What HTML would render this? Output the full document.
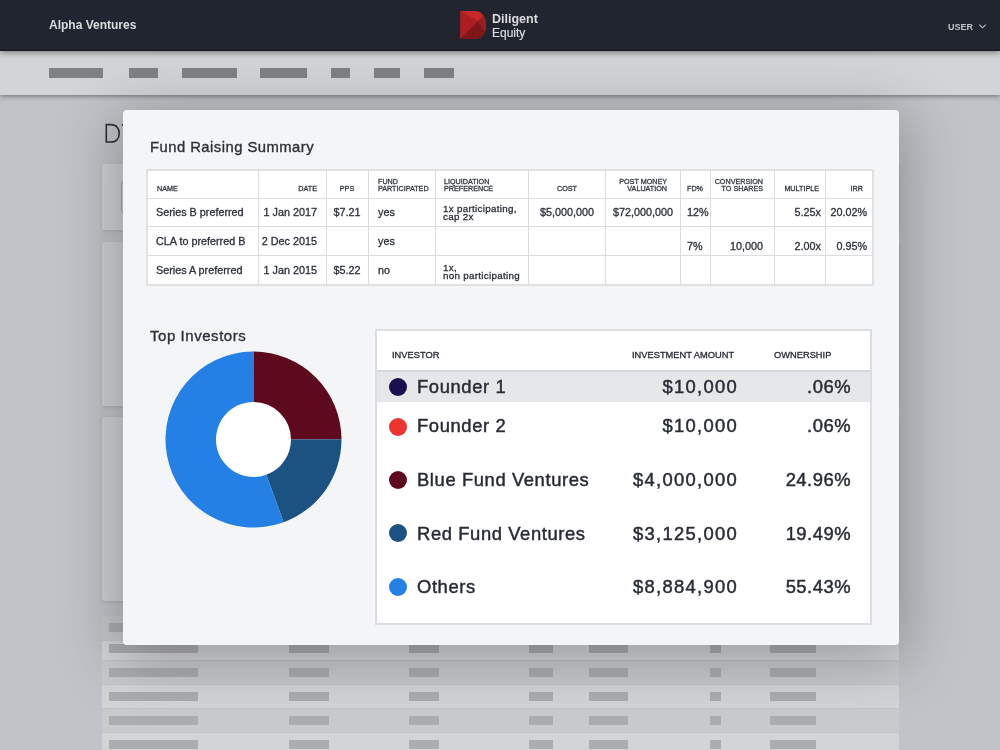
<!DOCTYPE html>
<html><head><meta charset="utf-8">
<style>
*{margin:0;padding:0;box-sizing:border-box;}
html,body{width:1000px;height:750px;overflow:hidden;}
body{position:relative;background:#c0c3c7;font-family:"Liberation Sans",sans-serif;color:#2b303a;}
.abs{position:absolute;}
.t{position:absolute;white-space:nowrap;will-change:transform;}
#hdr{left:0;top:0;width:1000px;height:49.5px;background:#21252f;z-index:3;box-shadow:0 1px 0 #14171d,0 2px 7px rgba(0,0,0,.5);}
#nav{left:0;top:50px;width:1000px;height:44.5px;background:#d3d4d6;z-index:2;box-shadow:0 1px 5px rgba(0,0,0,.45);}
.nb{position:absolute;top:18px;height:9.5px;background:#7e8284;}
.card{position:absolute;left:102px;width:797px;background:#cfd0d2;border-radius:2px;box-shadow:0 1px 3px rgba(0,0,0,.12);}
.brow{position:absolute;left:102px;width:797px;border-top:1px solid #c2c3c5;}
.bar{position:absolute;height:9px;background:#acadaf;}
#modal{left:123px;top:109.5px;width:776px;height:535.5px;background:#f4f5f7;border-radius:4px;z-index:5;box-shadow:0 10px 60px 6px rgba(0,0,0,.27);}
#mc{position:absolute;left:0;top:0;width:1000px;height:750px;z-index:6;}
.vl{position:absolute;width:1px;background:#dcdddf;}
.hl{position:absolute;height:1px;background:#dcdddf;}
.dot{position:absolute;width:18px;height:18px;border-radius:50%;}
</style></head><body>
<div id="hdr" class="abs">
<div class="t" style="left:49.00px;top:18.54px;font-size:12px;line-height:12px;font-weight:bold;color:#dcdde0;letter-spacing:0px;">Alpha Ventures</div>
<svg class="abs" style="left:459px;top:10px" width="28" height="30" viewBox="0 0 28 30">
<path d="M1.1 1.1 H15 C23 1.1 27.1 7 27.1 15 C27.1 23 23 29 15 29 H1.1 Z" fill="#ad1e24"/>
<path d="M1.1 1.1 H15 C19.5 1.1 22.5 3 24.2 5.9 L19 10.9 Z" fill="#c8292a"/>
<path d="M1.1 29 L19 10.9 L26 21.6 C24.5 26.2 20.5 29 15 29 Z" fill="#7f171a"/>
<path d="M19 10.9 L24.2 5.9 C26.1 8.5 27.1 11.5 27.1 15 C27.1 17.5 26.7 19.7 26 21.6 Z" fill="#96201f"/>
</svg>
<div class="t" style="left:491.60px;top:13.32px;font-size:12.5px;line-height:12.5px;font-weight:bold;color:#dcdde0;letter-spacing:0px;">Diligent</div>
<div class="t" style="left:491.80px;top:26.74px;font-size:12px;line-height:12px;font-weight:normal;color:#dcdde0;letter-spacing:0px;-webkit-text-stroke:0.2px #dcdde0;">Equity</div>
<div class="t" style="left:947.50px;top:23.18px;font-size:9px;line-height:9px;font-weight:bold;color:#c0c1c4;letter-spacing:0px;">USER</div>
<svg class="abs" style="left:978px;top:23px" width="9" height="7" viewBox="0 0 9 7"><path d="M1.3 1.6 L4.5 4.8 L7.7 1.6" stroke="#c0c1c4" stroke-width="1.1" fill="none"/></svg>
</div>
<div id="nav" class="abs">
<div class="nb" style="left:49px;width:54px"></div>
<div class="nb" style="left:129px;width:29px"></div>
<div class="nb" style="left:182px;width:55px"></div>
<div class="nb" style="left:260px;width:47px"></div>
<div class="nb" style="left:331px;width:19px"></div>
<div class="nb" style="left:374px;width:26px"></div>
<div class="nb" style="left:424px;width:30px"></div>
</div>
<svg class="abs" style="left:0;top:0" width="130" height="160"><path d="M106.3 124.6 V142 H111 C116.6 142 119.2 138 119.2 133.3 C119.2 128.6 116.6 124.6 111 124.6 Z" stroke="#2c2f35" stroke-width="1.6" fill="none"/><rect x="121.8" y="124.2" width="1.2" height="1.6" fill="#2c2f35"/></svg>
<div class="card" style="top:164px;height:66px;"><div class="abs" style="left:19px;top:16px;width:300px;height:34px;border:1px solid #a4a6a8;border-radius:4px;"></div></div>
<div class="card" style="top:242px;height:164px;"></div>
<div class="card" style="top:417px;height:184px;"></div>
<div class="brow" style="top:615px;height:25px;background:#c6c7c9"></div>
<div class="brow" style="top:640px;height:20px;background:#d3d4d6"></div>
<div class="brow" style="top:660px;height:24px;background:#c9cacc"></div>
<div class="brow" style="top:684px;height:24px;background:#d3d4d6"></div>
<div class="brow" style="top:708px;height:24px;background:#c9cacc"></div>
<div class="brow" style="top:732px;height:24px;background:#d3d4d6"></div>
<div class="bar" style="left:108.75px;top:623px;width:89px"></div>
<div class="bar" style="left:289px;top:623px;width:40px"></div>
<div class="bar" style="left:409px;top:623px;width:29.5px"></div>
<div class="bar" style="left:529px;top:623px;width:24px"></div>
<div class="bar" style="left:589px;top:623px;width:39px"></div>
<div class="bar" style="left:710px;top:623px;width:11px"></div>
<div class="bar" style="left:769.5px;top:623px;width:46.5px"></div>
<div class="bar" style="left:108.75px;top:644px;width:89px"></div>
<div class="bar" style="left:289px;top:644px;width:40px"></div>
<div class="bar" style="left:409px;top:644px;width:29.5px"></div>
<div class="bar" style="left:529px;top:644px;width:24px"></div>
<div class="bar" style="left:589px;top:644px;width:39px"></div>
<div class="bar" style="left:710px;top:644px;width:11px"></div>
<div class="bar" style="left:769.5px;top:644px;width:46.5px"></div>
<div class="bar" style="left:108.75px;top:668px;width:89px"></div>
<div class="bar" style="left:289px;top:668px;width:40px"></div>
<div class="bar" style="left:409px;top:668px;width:29.5px"></div>
<div class="bar" style="left:529px;top:668px;width:24px"></div>
<div class="bar" style="left:589px;top:668px;width:39px"></div>
<div class="bar" style="left:710px;top:668px;width:11px"></div>
<div class="bar" style="left:769.5px;top:668px;width:46.5px"></div>
<div class="bar" style="left:108.75px;top:692px;width:89px"></div>
<div class="bar" style="left:289px;top:692px;width:40px"></div>
<div class="bar" style="left:409px;top:692px;width:29.5px"></div>
<div class="bar" style="left:529px;top:692px;width:24px"></div>
<div class="bar" style="left:589px;top:692px;width:39px"></div>
<div class="bar" style="left:710px;top:692px;width:11px"></div>
<div class="bar" style="left:769.5px;top:692px;width:46.5px"></div>
<div class="bar" style="left:108.75px;top:716px;width:89px"></div>
<div class="bar" style="left:289px;top:716px;width:40px"></div>
<div class="bar" style="left:409px;top:716px;width:29.5px"></div>
<div class="bar" style="left:529px;top:716px;width:24px"></div>
<div class="bar" style="left:589px;top:716px;width:39px"></div>
<div class="bar" style="left:710px;top:716px;width:11px"></div>
<div class="bar" style="left:769.5px;top:716px;width:46.5px"></div>
<div class="bar" style="left:108.75px;top:740px;width:89px"></div>
<div class="bar" style="left:289px;top:740px;width:40px"></div>
<div class="bar" style="left:409px;top:740px;width:29.5px"></div>
<div class="bar" style="left:529px;top:740px;width:24px"></div>
<div class="bar" style="left:589px;top:740px;width:39px"></div>
<div class="bar" style="left:710px;top:740px;width:11px"></div>
<div class="bar" style="left:769.5px;top:740px;width:46.5px"></div>
<div id="modal" class="abs"></div>
<div id="mc">
<div class="t" style="left:149.60px;top:139.67px;font-size:14.8px;line-height:14.8px;font-weight:normal;color:#2b303a;letter-spacing:0.47px;-webkit-text-stroke:0.35px #2b303a;">Fund Raising Summary</div>
<div class="abs" style="left:146px;top:168.5px;width:727.5px;height:117.0px;background:#fff;border:2px solid #e0e1e3;"></div>
<div class="vl" style="left:257.5px;top:169.5px;height:115.0px"></div>
<div class="vl" style="left:325.5px;top:169.5px;height:115.0px"></div>
<div class="vl" style="left:367.5px;top:169.5px;height:115.0px"></div>
<div class="vl" style="left:434.5px;top:169.5px;height:115.0px"></div>
<div class="vl" style="left:528.0px;top:169.5px;height:115.0px"></div>
<div class="vl" style="left:605.0px;top:169.5px;height:115.0px"></div>
<div class="vl" style="left:679.5px;top:169.5px;height:115.0px"></div>
<div class="vl" style="left:709.5px;top:169.5px;height:115.0px"></div>
<div class="vl" style="left:773.5px;top:169.5px;height:115.0px"></div>
<div class="vl" style="left:825.0px;top:169.5px;height:115.0px"></div>
<div class="hl" style="left:147px;top:197.5px;width:725.5px"></div>
<div class="hl" style="left:147px;top:226.1px;width:725.5px"></div>
<div class="hl" style="left:147px;top:255.1px;width:725.5px"></div>
<div class="t" style="left:156.50px;top:185.01px;font-size:7.2px;line-height:7.2px;font-weight:normal;color:#343942;letter-spacing:0px;-webkit-text-stroke:0.3px #343942;">NAME</div>
<div class="t" style="left:-83.00px;width:400px;text-align:right;top:185.01px;font-size:7.2px;line-height:7.2px;font-weight:normal;color:#343942;letter-spacing:0px;-webkit-text-stroke:0.3px #343942;">DATE</div>
<div class="t" style="left:146.50px;width:400px;text-align:center;top:185.01px;font-size:7.2px;line-height:7.2px;font-weight:normal;color:#343942;letter-spacing:0px;-webkit-text-stroke:0.3px #343942;">PPS</div>
<div class="t" style="left:377.60px;top:177.71px;font-size:7.2px;line-height:7.2px;font-weight:normal;color:#343942;letter-spacing:0px;-webkit-text-stroke:0.3px #343942;">FUND</div>
<div class="t" style="left:377.60px;top:185.01px;font-size:7.2px;line-height:7.2px;font-weight:normal;color:#343942;letter-spacing:0px;-webkit-text-stroke:0.3px #343942;">PARTICIPATED</div>
<div class="t" style="left:444.30px;top:177.71px;font-size:7.2px;line-height:7.2px;font-weight:normal;color:#343942;letter-spacing:0px;-webkit-text-stroke:0.3px #343942;">LIQUIDATION</div>
<div class="t" style="left:444.30px;top:185.01px;font-size:7.2px;line-height:7.2px;font-weight:normal;color:#343942;letter-spacing:0px;-webkit-text-stroke:0.3px #343942;">PREFERENCE</div>
<div class="t" style="left:367.00px;width:400px;text-align:center;top:185.01px;font-size:7.2px;line-height:7.2px;font-weight:normal;color:#343942;letter-spacing:0px;-webkit-text-stroke:0.3px #343942;">COST</div>
<div class="t" style="left:267.00px;width:400px;text-align:right;top:177.71px;font-size:7.2px;line-height:7.2px;font-weight:normal;color:#343942;letter-spacing:0px;-webkit-text-stroke:0.3px #343942;">POST MONEY</div>
<div class="t" style="left:267.00px;width:400px;text-align:right;top:185.01px;font-size:7.2px;line-height:7.2px;font-weight:normal;color:#343942;letter-spacing:0px;-webkit-text-stroke:0.3px #343942;">VALUATION</div>
<div class="t" style="left:686.50px;top:185.01px;font-size:7.2px;line-height:7.2px;font-weight:normal;color:#343942;letter-spacing:0px;-webkit-text-stroke:0.3px #343942;">FD%</div>
<div class="t" style="left:363.40px;width:400px;text-align:right;top:177.71px;font-size:7.2px;line-height:7.2px;font-weight:normal;color:#343942;letter-spacing:0px;-webkit-text-stroke:0.3px #343942;">CONVERSION</div>
<div class="t" style="left:363.40px;width:400px;text-align:right;top:185.01px;font-size:7.2px;line-height:7.2px;font-weight:normal;color:#343942;letter-spacing:0px;-webkit-text-stroke:0.3px #343942;">TO SHARES</div>
<div class="t" style="left:419.00px;width:400px;text-align:right;top:185.01px;font-size:7.2px;line-height:7.2px;font-weight:normal;color:#343942;letter-spacing:0px;-webkit-text-stroke:0.3px #343942;">MULTIPLE</div>
<div class="t" style="left:463.00px;width:400px;text-align:right;top:185.01px;font-size:7.2px;line-height:7.2px;font-weight:normal;color:#343942;letter-spacing:0px;-webkit-text-stroke:0.3px #343942;">IRR</div>
<div class="t" style="left:156.40px;top:207.16px;font-size:10.8px;line-height:10.8px;font-weight:normal;color:#2b303a;letter-spacing:0px;-webkit-text-stroke:0.3px #2b303a;">Series B preferred</div>
<div class="t" style="left:-83.00px;width:400px;text-align:right;top:207.16px;font-size:10.8px;line-height:10.8px;font-weight:normal;color:#2b303a;letter-spacing:0px;-webkit-text-stroke:0.3px #2b303a;">1 Jan 2017</div>
<div class="t" style="left:147.00px;width:400px;text-align:center;top:207.16px;font-size:10.8px;line-height:10.8px;font-weight:normal;color:#2b303a;letter-spacing:0px;-webkit-text-stroke:0.3px #2b303a;">$7.21</div>
<div class="t" style="left:377.60px;top:207.16px;font-size:10.8px;line-height:10.8px;font-weight:normal;color:#2b303a;letter-spacing:0px;-webkit-text-stroke:0.3px #2b303a;">yes</div>
<div class="t" style="left:156.40px;top:236.26px;font-size:10.8px;line-height:10.8px;font-weight:normal;color:#2b303a;letter-spacing:0px;-webkit-text-stroke:0.3px #2b303a;">CLA to preferred B</div>
<div class="t" style="left:-83.00px;width:400px;text-align:right;top:236.26px;font-size:10.8px;line-height:10.8px;font-weight:normal;color:#2b303a;letter-spacing:0px;-webkit-text-stroke:0.3px #2b303a;">2 Dec 2015</div>
<div class="t" style="left:377.60px;top:236.26px;font-size:10.8px;line-height:10.8px;font-weight:normal;color:#2b303a;letter-spacing:0px;-webkit-text-stroke:0.3px #2b303a;">yes</div>
<div class="t" style="left:156.40px;top:264.86px;font-size:10.8px;line-height:10.8px;font-weight:normal;color:#2b303a;letter-spacing:0px;-webkit-text-stroke:0.3px #2b303a;">Series A preferred</div>
<div class="t" style="left:-83.00px;width:400px;text-align:right;top:264.86px;font-size:10.8px;line-height:10.8px;font-weight:normal;color:#2b303a;letter-spacing:0px;-webkit-text-stroke:0.3px #2b303a;">1 Jan 2015</div>
<div class="t" style="left:147.00px;width:400px;text-align:center;top:264.86px;font-size:10.8px;line-height:10.8px;font-weight:normal;color:#2b303a;letter-spacing:0px;-webkit-text-stroke:0.3px #2b303a;">$5.22</div>
<div class="t" style="left:377.60px;top:264.86px;font-size:10.8px;line-height:10.8px;font-weight:normal;color:#2b303a;letter-spacing:0px;-webkit-text-stroke:0.3px #2b303a;">no</div>
<div class="t" style="left:443.00px;top:203.90px;font-size:9.8px;line-height:9.8px;font-weight:normal;color:#2b303a;letter-spacing:0.3px;-webkit-text-stroke:0.3px #2b303a;">1x participating,</div>
<div class="t" style="left:443.00px;top:212.00px;font-size:9.8px;line-height:9.8px;font-weight:normal;color:#2b303a;letter-spacing:0.3px;-webkit-text-stroke:0.3px #2b303a;">cap 2x</div>
<div class="t" style="left:443.00px;top:263.40px;font-size:9.8px;line-height:9.8px;font-weight:normal;color:#2b303a;letter-spacing:0.3px;-webkit-text-stroke:0.3px #2b303a;">1x,</div>
<div class="t" style="left:443.00px;top:270.90px;font-size:9.8px;line-height:9.8px;font-weight:normal;color:#2b303a;letter-spacing:0.3px;-webkit-text-stroke:0.3px #2b303a;">non participating</div>
<div class="t" style="left:367.00px;width:400px;text-align:center;top:207.16px;font-size:10.8px;line-height:10.8px;font-weight:normal;color:#2b303a;letter-spacing:0px;-webkit-text-stroke:0.3px #2b303a;">$5,000,000</div>
<div class="t" style="left:442.50px;width:400px;text-align:center;top:207.16px;font-size:10.8px;line-height:10.8px;font-weight:normal;color:#2b303a;letter-spacing:0px;-webkit-text-stroke:0.3px #2b303a;">$72,000,000</div>
<div class="t" style="left:686.50px;top:207.16px;font-size:10.8px;line-height:10.8px;font-weight:normal;color:#2b303a;letter-spacing:0px;-webkit-text-stroke:0.3px #2b303a;">12%</div>
<div class="t" style="left:421.00px;width:400px;text-align:right;top:207.16px;font-size:10.8px;line-height:10.8px;font-weight:normal;color:#2b303a;letter-spacing:0px;-webkit-text-stroke:0.3px #2b303a;">5.25x</div>
<div class="t" style="left:467.00px;width:400px;text-align:right;top:207.16px;font-size:10.8px;line-height:10.8px;font-weight:normal;color:#2b303a;letter-spacing:0px;-webkit-text-stroke:0.3px #2b303a;">20.02%</div>
<div class="t" style="left:686.50px;top:241.36px;font-size:10.8px;line-height:10.8px;font-weight:normal;color:#2b303a;letter-spacing:0px;-webkit-text-stroke:0.3px #2b303a;">7%</div>
<div class="t" style="left:363.40px;width:400px;text-align:right;top:241.36px;font-size:10.8px;line-height:10.8px;font-weight:normal;color:#2b303a;letter-spacing:0px;-webkit-text-stroke:0.3px #2b303a;">10,000</div>
<div class="t" style="left:421.00px;width:400px;text-align:right;top:241.36px;font-size:10.8px;line-height:10.8px;font-weight:normal;color:#2b303a;letter-spacing:0px;-webkit-text-stroke:0.3px #2b303a;">2.00x</div>
<div class="t" style="left:467.00px;width:400px;text-align:right;top:241.36px;font-size:10.8px;line-height:10.8px;font-weight:normal;color:#2b303a;letter-spacing:0px;-webkit-text-stroke:0.3px #2b303a;">0.95%</div>
<div class="t" style="left:150.00px;top:328.20px;font-size:15px;line-height:15px;font-weight:normal;color:#2b303a;letter-spacing:0.55px;-webkit-text-stroke:0.35px #2b303a;">Top Investors</div>
<svg class="abs" style="left:0;top:0" width="1000" height="750"><circle cx="253.5" cy="439.5" r="38.0" fill="#ffffff"/><path d="M253.50 351.50 A88 88 0 0 1 341.50 439.28 L291.00 439.41 A37.5 37.5 0 0 0 253.50 402.00 Z" fill="#5e0a1e"/><path d="M341.50 439.28 A88 88 0 0 1 283.57 522.20 L266.31 474.74 A37.5 37.5 0 0 0 291.00 439.41 Z" fill="#1c5282"/><path d="M283.57 522.20 A88 88 0 1 1 252.84 351.50 L253.22 402.00 A37.5 37.5 0 1 0 266.31 474.74 Z" fill="#2480e4"/><path d="M252.84 351.50 A88 88 0 0 1 253.17 351.50 L253.36 402.00 A37.5 37.5 0 0 0 253.22 402.00 Z" fill="#1a0f4f"/><path d="M253.17 351.50 A88 88 0 0 1 253.50 351.50 L253.50 402.00 A37.5 37.5 0 0 0 253.36 402.00 Z" fill="#e8312f"/></svg>
<div class="abs" style="left:375px;top:329px;width:497px;height:296px;background:#fff;border:2px solid #dcdde0;"></div>
<div class="abs" style="left:377px;top:370px;width:493px;height:2px;background:#d6d7d9;"></div>
<div class="abs" style="left:377px;top:372px;width:493px;height:30px;background:#e6e7e9;"></div>
<div class="t" style="left:392.00px;top:351.13px;font-size:9.3px;line-height:9.3px;font-weight:normal;color:#272b34;letter-spacing:0px;-webkit-text-stroke:0.3px #272b34;">INVESTOR</div>
<div class="t" style="left:631.60px;top:351.13px;font-size:9.3px;line-height:9.3px;font-weight:normal;color:#272b34;letter-spacing:0px;-webkit-text-stroke:0.3px #272b34;">INVESTMENT AMOUNT</div>
<div class="t" style="left:773.60px;top:351.13px;font-size:9.3px;line-height:9.3px;font-weight:normal;color:#272b34;letter-spacing:0px;-webkit-text-stroke:0.3px #272b34;">OWNERSHIP</div>
<div class="dot" style="left:388.7px;top:377.5px;background:#1a0f4f"></div>
<div class="t" style="left:417.40px;top:377.62px;font-size:18.4px;line-height:18.4px;font-weight:normal;color:#272b34;letter-spacing:0.6px;-webkit-text-stroke:0.45px #272b34;">Founder 1</div>
<div class="t" style="left:338.10px;width:400px;text-align:right;top:377.62px;font-size:18.4px;line-height:18.4px;font-weight:normal;color:#272b34;letter-spacing:1.3px;-webkit-text-stroke:0.45px #272b34;">$10,000</div>
<div class="t" style="left:450.50px;width:400px;text-align:right;top:377.62px;font-size:18.4px;line-height:18.4px;font-weight:normal;color:#272b34;letter-spacing:0.5px;-webkit-text-stroke:0.45px #272b34;">.06%</div>
<div class="dot" style="left:388.7px;top:417.7px;background:#ec3430"></div>
<div class="t" style="left:417.40px;top:417.42px;font-size:18.4px;line-height:18.4px;font-weight:normal;color:#272b34;letter-spacing:0.6px;-webkit-text-stroke:0.45px #272b34;">Founder 2</div>
<div class="t" style="left:338.10px;width:400px;text-align:right;top:417.42px;font-size:18.4px;line-height:18.4px;font-weight:normal;color:#272b34;letter-spacing:1.3px;-webkit-text-stroke:0.45px #272b34;">$10,000</div>
<div class="t" style="left:450.50px;width:400px;text-align:right;top:417.42px;font-size:18.4px;line-height:18.4px;font-weight:normal;color:#272b34;letter-spacing:0.5px;-webkit-text-stroke:0.45px #272b34;">.06%</div>
<div class="dot" style="left:388.7px;top:471px;background:#5e0a1e"></div>
<div class="t" style="left:417.40px;top:471.22px;font-size:18.4px;line-height:18.4px;font-weight:normal;color:#272b34;letter-spacing:0.6px;-webkit-text-stroke:0.45px #272b34;">Blue Fund Ventures</div>
<div class="t" style="left:338.10px;width:400px;text-align:right;top:471.22px;font-size:18.4px;line-height:18.4px;font-weight:normal;color:#272b34;letter-spacing:1.3px;-webkit-text-stroke:0.45px #272b34;">$4,000,000</div>
<div class="t" style="left:450.50px;width:400px;text-align:right;top:471.22px;font-size:18.4px;line-height:18.4px;font-weight:normal;color:#272b34;letter-spacing:0.5px;-webkit-text-stroke:0.45px #272b34;">24.96%</div>
<div class="dot" style="left:388.7px;top:524.4px;background:#1c5282"></div>
<div class="t" style="left:417.40px;top:524.62px;font-size:18.4px;line-height:18.4px;font-weight:normal;color:#272b34;letter-spacing:0.6px;-webkit-text-stroke:0.45px #272b34;">Red Fund Ventures</div>
<div class="t" style="left:338.10px;width:400px;text-align:right;top:524.62px;font-size:18.4px;line-height:18.4px;font-weight:normal;color:#272b34;letter-spacing:1.3px;-webkit-text-stroke:0.45px #272b34;">$3,125,000</div>
<div class="t" style="left:450.50px;width:400px;text-align:right;top:524.62px;font-size:18.4px;line-height:18.4px;font-weight:normal;color:#272b34;letter-spacing:0.5px;-webkit-text-stroke:0.45px #272b34;">19.49%</div>
<div class="dot" style="left:388.7px;top:578px;background:#2480e4"></div>
<div class="t" style="left:417.40px;top:578.32px;font-size:18.4px;line-height:18.4px;font-weight:normal;color:#272b34;letter-spacing:0.6px;-webkit-text-stroke:0.45px #272b34;">Others</div>
<div class="t" style="left:338.10px;width:400px;text-align:right;top:578.32px;font-size:18.4px;line-height:18.4px;font-weight:normal;color:#272b34;letter-spacing:1.3px;-webkit-text-stroke:0.45px #272b34;">$8,884,900</div>
<div class="t" style="left:450.50px;width:400px;text-align:right;top:578.32px;font-size:18.4px;line-height:18.4px;font-weight:normal;color:#272b34;letter-spacing:0.5px;-webkit-text-stroke:0.45px #272b34;">55.43%</div>
</div>
</body></html>
